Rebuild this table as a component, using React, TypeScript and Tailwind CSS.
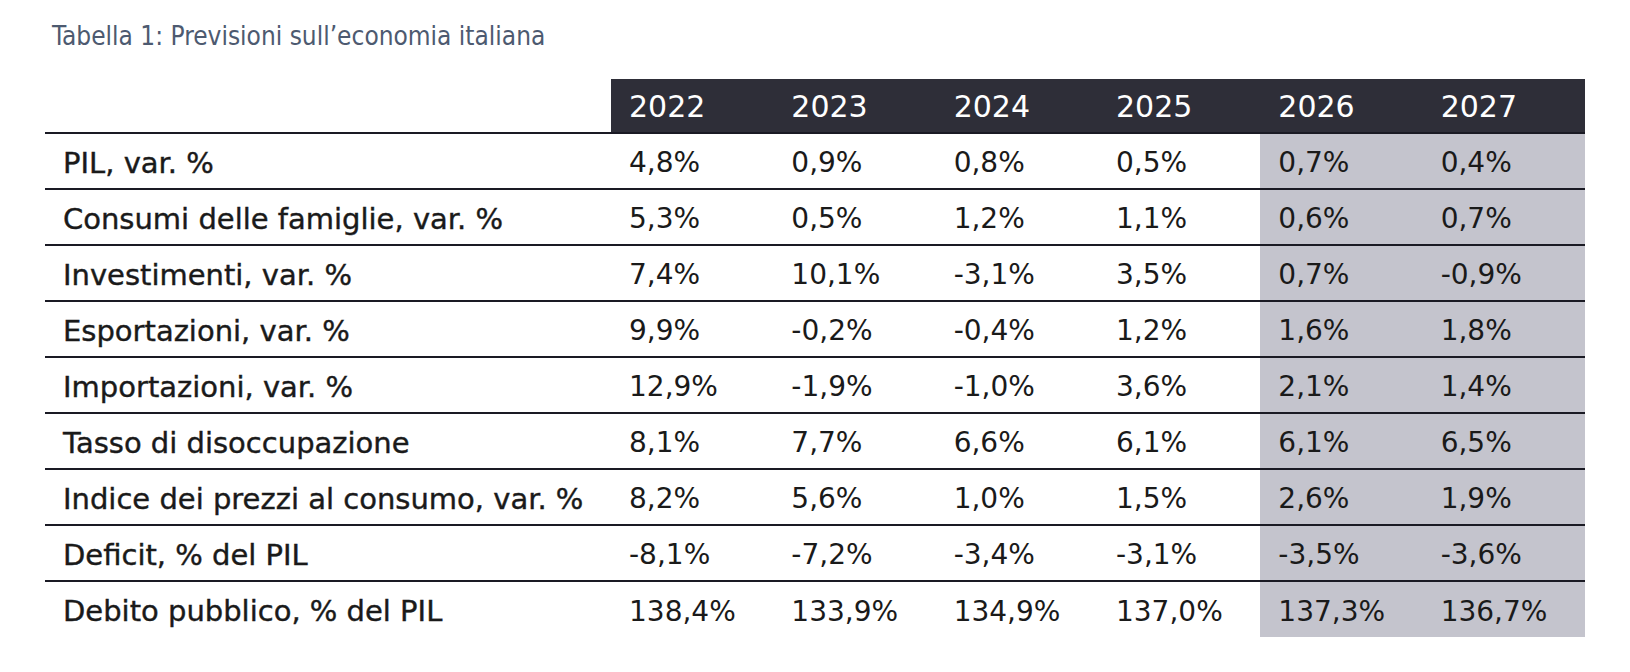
import React from "react";

const years = ["2022", "2023", "2024", "2025", "2026", "2027"];

const rows: [string, string[]][] = [
  ["PIL, var. %", ["4,8%", "0,9%", "0,8%", "0,5%", "0,7%", "0,4%"]],
  ["Consumi delle famiglie, var. %", ["5,3%", "0,5%", "1,2%", "1,1%", "0,6%", "0,7%"]],
  ["Investimenti, var. %", ["7,4%", "10,1%", "-3,1%", "3,5%", "0,7%", "-0,9%"]],
  ["Esportazioni, var. %", ["9,9%", "-0,2%", "-0,4%", "1,2%", "1,6%", "1,8%"]],
  ["Importazioni, var. %", ["12,9%", "-1,9%", "-1,0%", "3,6%", "2,1%", "1,4%"]],
  ["Tasso di disoccupazione", ["8,1%", "7,7%", "6,6%", "6,1%", "6,1%", "6,5%"]],
  ["Indice dei prezzi al consumo, var. %", ["8,2%", "5,6%", "1,0%", "1,5%", "2,6%", "1,9%"]],
  ["Deficit, % del PIL", ["-8,1%", "-7,2%", "-3,4%", "-3,1%", "-3,5%", "-3,6%"]],
  ["Debito pubblico, % del PIL", ["138,4%", "133,9%", "134,9%", "137,0%", "137,3%", "136,7%"]],
];

export default function App() {
  return (
    <div className="w-[1630px] h-[672px] bg-white overflow-hidden">
      <div className="pl-[52px] pt-[23px] text-[26px] leading-[26px] text-[#4d5a70] font-['DejaVu_Sans_Condensed','DejaVu_Sans',sans-serif] [font-stretch:condensed]">
        Tabella 1: Previsioni sull’economia italiana
      </div>
      <div className="ml-[45px] mt-[30px] w-[1540px] font-['DejaVu_Sans',Verdana,sans-serif] text-[#1a1a1a]">
        {/* header */}
        <div className="grid grid-cols-[566px_repeat(6,1fr)] border-b-2 border-[#1a1a24]">
          <div className="h-[53px]" />
          {years.map((y) => (
            <div
              key={y}
              className="h-[53px] bg-[#2e2e38] text-white text-[30px] leading-[30px] flex items-center pl-[18px] pt-[2px]"
            >
              {y}
            </div>
          ))}
        </div>
        {rows.map(([label, vals], i) => {
          const last = i === rows.length - 1;
          return (
            <div
              key={label}
              className={
                last
                  ? "grid grid-cols-[566px_repeat(6,1fr)]"
                  : "grid grid-cols-[566px_repeat(6,1fr)] border-b-2 border-[#1a1a24]"
              }
            >
              <div
                className={
                  (last ? "h-[55px]" : "h-[54px]") +
                  " flex items-center pl-[18px] pt-[4px] text-[29px] leading-[29px] [-webkit-text-stroke:0.4px_#1a1a1a] whitespace-nowrap"
                }
              >
                {label}
              </div>
              {vals.map((v, j) => (
                <div
                  key={j}
                  className={
                    (last ? "h-[55px]" : "h-[54px]") +
                    (j >= 4 ? " bg-[#c4c4cd]" : "") +
                    " flex items-center pl-[18px] pt-[4px] text-[28px] leading-[28px]"
                  }
                >
                  {v}
                </div>
              ))}
            </div>
          );
        })}
      </div>
    </div>
  );
}
